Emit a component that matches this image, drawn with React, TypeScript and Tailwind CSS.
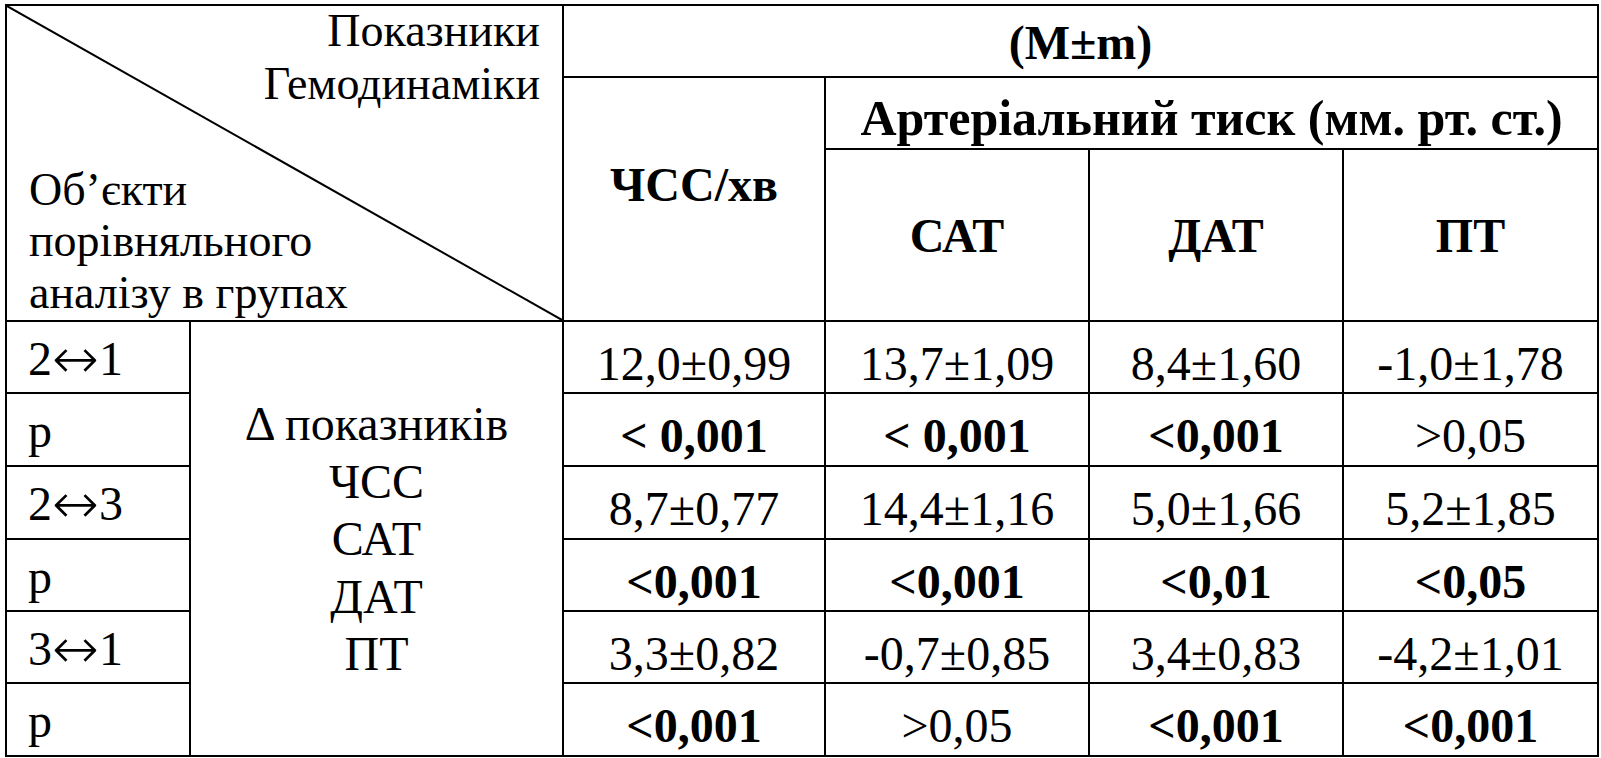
import React from "react";

type Val = { v: string; b?: boolean };

const rows: { label: string; cells: Val[] }[] = [
  { label: "2↔1", cells: [{ v: "12,0±0,99" }, { v: "13,7±1,09" }, { v: "8,4±1,60" }, { v: "-1,0±1,78" }] },
  { label: "p", cells: [{ v: "< 0,001", b: true }, { v: "< 0,001", b: true }, { v: "<0,001", b: true }, { v: ">0,05" }] },
  { label: "2↔3", cells: [{ v: "8,7±0,77" }, { v: "14,4±1,16" }, { v: "5,0±1,66" }, { v: "5,2±1,85" }] },
  { label: "p", cells: [{ v: "<0,001", b: true }, { v: "<0,001", b: true }, { v: "<0,01", b: true }, { v: "<0,05", b: true }] },
  { label: "3↔1", cells: [{ v: "3,3±0,82" }, { v: "-0,7±0,85" }, { v: "3,4±0,83" }, { v: "-4,2±1,01" }] },
  { label: "p", cells: [{ v: "<0,001", b: true }, { v: ">0,05" }, { v: "<0,001", b: true }, { v: "<0,001", b: true }] },
];

const rowHeights = ["h-[72px]", "h-[73px]", "h-[73px]", "h-[72px]", "h-[72px]", "h-[73px]"];

function Label({ text }: { text: string }) {
  const [a, b] = text.split("↔");
  if (b === undefined) return <>{text}</>;
  return (
    <>
      {a}
      <span className="[font-family:'DejaVu_Sans',sans-serif] font-extralight text-[56px] leading-none align-[-3px]">↔</span>
      {b}
    </>
  );
}

export default function App() {
  const td = "border-2 border-black p-0 align-top";

  return (
    <div className="bg-white min-h-[758px] w-[1601px] pt-[4px] pl-[5px] text-black font-['Liberation_Serif','Times_New_Roman',serif] text-[48px] leading-[57px]">
      <table className="table-fixed border-collapse w-[1592px]">
        <colgroup>
          <col className="w-[184px]" />
          <col className="w-[373px]" />
          <col className="w-[262px]" />
          <col className="w-[264px]" />
          <col className="w-[254px]" />
          <col className="w-[255px]" />
        </colgroup>
        <tbody>
          <tr className="h-[72px]">
            <td colSpan={2} rowSpan={3} className={`${td} relative`}>
              <svg className="absolute inset-0 w-full h-full" viewBox="0 0 100 100" preserveAspectRatio="none">
                <line x1="0" y1="0" x2="100" y2="100" stroke="black" strokeWidth="2" vectorEffect="non-scaling-stroke" />
              </svg>
              <div className="relative h-[314px] flex flex-col justify-between pl-[22px] pr-[22px] pb-[2px] text-[46px]">
                <div className="text-right leading-[53px] -mt-[2px]">
                  <div>Показники</div>
                  <div>Гемодинаміки</div>
                </div>
                <div className="text-left leading-[51.5px]">
                  <div>Об’єкти</div>
                  <div>порівняльного</div>
                  <div>аналізу в групах</div>
                </div>
              </div>
            </td>
            <td colSpan={4} className={`${td} text-center font-bold pt-[8px]`}>(M±m)</td>
          </tr>
          <tr className="h-[72px]">
            <td rowSpan={2} className={`${td} text-center font-bold pt-[78px]`}>ЧСС/хв</td>
            <td colSpan={3} className={`${td} text-center font-bold text-[50px] pt-[12px]`}>Артеріальний тиск (мм. рт. ст.)</td>
          </tr>
          <tr className="h-[172px]">
            <td className={`${td} text-center font-bold pt-[57px]`}>САТ</td>
            <td className={`${td} text-center font-bold pt-[57px]`}>ДАТ</td>
            <td className={`${td} text-center font-bold pt-[57px]`}>ПТ</td>
          </tr>
          {rows.map((r, i) => (
            <tr key={i} className={rowHeights[i]}>
              <td className={`${td} pl-[21px] pt-[8px]`}>
                <Label text={r.label} />
              </td>
              {i === 0 && (
                <td rowSpan={6} className={`${td} text-center leading-[57.5px] pt-[73px]`}>
                  <div>Δ показників</div>
                  <div>ЧСС</div>
                  <div>САТ</div>
                  <div>ДАТ</div>
                  <div>ПТ</div>
                </td>
              )}
              {r.cells.map((c, j) => (
                <td key={j} className={`${td} text-center pt-[13px] ${c.b ? "font-bold" : ""}`}>
                  {c.v}
                </td>
              ))}
            </tr>
          ))}
        </tbody>
      </table>
    </div>
  );
}
